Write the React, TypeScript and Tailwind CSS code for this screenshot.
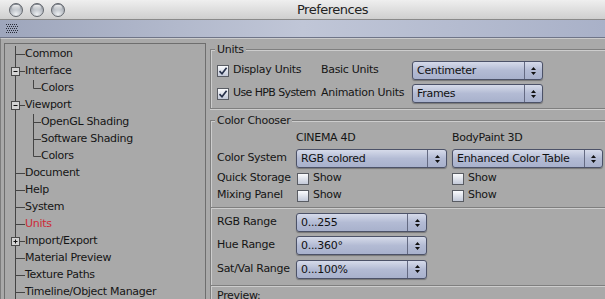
import React from "react";

type TreeItem = {
  label: string;
  child?: boolean;
  last?: boolean;
  box?: "minus" | "plus";
  active?: boolean;
};

const treeItems: TreeItem[] = [
  { label: "Common" },
  { label: "Interface", box: "minus" },
  { label: "Colors", child: true, last: true },
  { label: "Viewport", box: "minus" },
  { label: "OpenGL Shading", child: true },
  { label: "Software Shading", child: true },
  { label: "Colors", child: true, last: true },
  { label: "Document" },
  { label: "Help" },
  { label: "System" },
  { label: "Units", active: true },
  { label: "Import/Export", box: "plus" },
  { label: "Material Preview" },
  { label: "Texture Paths" },
  { label: "Timeline/Object Manager" },
];

function TrafficLight() {
  return (
    <span className="flex h-[14px] w-[14px] justify-center rounded-full border border-[#62666d] bg-[radial-gradient(circle_at_50%_85%,#eceff2_0%,#b4b9c0_55%,#767b83_100%)] pt-[1px]">
      <span className="h-[5px] w-[8px] rounded-full bg-gradient-to-b from-[#ffffffdd] to-[#ffffff00]" />
    </span>
  );
}

function Grip() {
  const dots = [];
  for (let r = 0; r < 5; r++) {
    for (let c = 0; c < 6; c++) {
      dots.push(<rect key={`${r}-${c}`} x={c * 2 + (r % 2)} y={r * 2} width={1} height={1} fill="#2a2d38" />);
    }
  }
  return (
    <svg width={12} height={10} viewBox="0 0 12 10" className="shrink-0">
      {dots}
    </svg>
  );
}

function TreeRow({ item }: { item: TreeItem }) {
  const w = item.child ? 36 : 20;
  return (
    <div className="flex h-[17px] items-center">
      <svg width={w} height={17} viewBox={`0 0 ${w} 17`} className="shrink-0">
        <line x1={10.5} y1={0} x2={10.5} y2={17} stroke="#444" />
        {item.child ? (
          <>
            <line x1={28.5} y1={0} x2={28.5} y2={item.last ? 8.5 : 17} stroke="#444" />
            <line x1={28.5} y1={8.5} x2={36} y2={8.5} stroke="#444" />
          </>
        ) : (
          <line x1={10.5} y1={8.5} x2={20} y2={8.5} stroke="#444" />
        )}
        {item.box && (
          <>
            <rect x={6.5} y={4.5} width={8} height={8} fill="#d4d4d4" stroke="#4a4a4a" />
            <line x1={8.5} y1={8.5} x2={12.5} y2={8.5} stroke="#111" />
            {item.box === "plus" && <line x1={10.5} y1={6.5} x2={10.5} y2={10.5} stroke="#111" />}
          </>
        )}
      </svg>
      <span className={item.active ? "text-[#cc2a36]" : "text-[#151515]"}>{item.label}</span>
    </div>
  );
}

function Checkbox({ checked }: { checked?: boolean }) {
  return (
    <span className="flex h-[12px] w-[12px] shrink-0 items-center justify-center border border-[#595c63] bg-gradient-to-b from-[#fbfcfe] to-[#c3c9d8]">
      {checked && (
        <svg width={10} height={10} viewBox="0 0 10 10">
          <path d="M1.5 5.2 L4 7.8 L8.6 1.8" fill="none" stroke="#27314a" strokeWidth={1.7} />
        </svg>
      )}
    </span>
  );
}

function Popup({ value, width, arrow }: { value: string; width: string; arrow: string }) {
  return (
    <div
      className={`${width} flex h-[19px] shrink-0 rounded-[3px] border border-[#4c5268] bg-gradient-to-b from-[#d6dbea] via-[#b3bbd4] to-[#a8b1cc] shadow-[0_1px_1px_rgba(0,0,0,0.3)]`}
    >
      <span className="flex-1 truncate pl-[4px] leading-[17px] text-[#111]">{value}</span>
      <span className={`${arrow} flex items-center justify-center border-l border-[#646a82]`}>
        <svg width={5} height={8} viewBox="0 0 5 8">
          <path d="M2.5 0 L5 3 L0 3 Z M0 5 L5 5 L2.5 8 Z" fill="#111" />
        </svg>
      </span>
    </div>
  );
}

// etched separator: dark line over a light one
function Separator({ className }: { className: string }) {
  return <div className={`${className} h-[2px] border-b border-t border-b-[#cdcdcd] border-t-[#7f7f7f]`} />;
}

export default function App() {
  return (
    <div className="flex h-[299px] w-[605px] flex-col overflow-hidden bg-[#a9a9a9] font-[family-name:DejaVu_Sans,sans-serif] text-[11px] tracking-[-0.3px] text-[#151515]">
      {/* title bar */}
      <div className="flex h-[20px] shrink-0 items-center border-b border-[#8a8a8a] bg-gradient-to-b from-[#efefef] to-[#cfcfcf] pl-[9px]">
        <div className="flex gap-[7px]">
          <TrafficLight />
          <TrafficLight />
          <TrafficLight />
        </div>
        <span className="ml-[232px] text-[13px] tracking-[-0.5px] text-[#222]">Preferences</span>
      </div>

      {/* toolbar */}
      <div className="flex h-[18px] shrink-0 items-center border-b border-[#6f7588] bg-gradient-to-r from-[#9ea6bc] via-[#c0c6d7] to-[#a9b1c8] pl-[6px]">
        <Grip />
      </div>

      <div className="flex min-h-0 flex-1 border-l border-t border-l-[#7c7c7c] border-t-[#cbcbcb]">
        {/* tree */}
        <div className="flex w-[206px] shrink-0 flex-col pl-[3px] pt-[4px]">
          <div className="w-[202px] flex-1 border border-[#6e6e6e] pt-[2px]">
            {treeItems.map((item, i) => (
              <TreeRow key={i} item={item} />
            ))}
          </div>
        </div>

        {/* settings */}
        <div className="flex min-w-0 flex-1 flex-col pl-[3px] pt-[4px]">
          <fieldset className="border border-r-0 border-[#7f7f7f] p-0 shadow-[inset_1px_1px_0_#cdcdcd,0_1px_0_#cdcdcd]">
            <legend className="ml-[4px] bg-[#a9a9a9] px-[2px] leading-[13px]">Units</legend>
            <div className="pb-[3px] pl-[6px] pt-[3px]">
              <div className="flex h-[23px] items-center">
                <div className="flex w-[104px] items-center gap-[4px]">
                  <Checkbox checked />
                  <span>Display Units</span>
                </div>
                <span className="w-[91px]">Basic Units</span>
                <Popup value="Centimeter" width="w-[131px]" arrow="w-[18px]" />
              </div>
              <div className="flex h-[23px] items-center">
                <div className="flex w-[104px] items-center gap-[4px]">
                  <Checkbox checked />
                  <span className="whitespace-nowrap tracking-[-0.6px]">Use HPB System</span>
                </div>
                <span className="w-[91px] whitespace-nowrap">Animation Units</span>
                <Popup value="Frames" width="w-[131px]" arrow="w-[18px]" />
              </div>
            </div>
          </fieldset>

          <fieldset className="mt-[5px] border border-b-0 border-r-0 border-[#7f7f7f] p-0 shadow-[inset_1px_1px_0_#cdcdcd]">
            <legend className="ml-[4px] bg-[#a9a9a9] px-[2px] leading-[13px]">Color Chooser</legend>
            <div className="pl-[6px] pt-[2px]">
              <div className="flex h-[18px] items-center">
                <span className="w-[79px]" />
                <span className="w-[156px]">CINEMA 4D</span>
                <span>BodyPaint 3D</span>
              </div>
              <div className="flex h-[23px] items-center">
                <span className="w-[79px]">Color System</span>
                <Popup value="RGB colored" width="w-[151px]" arrow="w-[19px]" />
                <span className="w-[5px]" />
                <Popup value="Enhanced Color Table" width="w-[151px]" arrow="w-[18px]" />
              </div>
              <div className="flex h-[17px] items-center">
                <span className="w-[79px] whitespace-nowrap">Quick Storage</span>
                <div className="flex w-[156px] items-center gap-[4px] pl-[1px]">
                  <Checkbox />
                  <span>Show</span>
                </div>
                <div className="flex items-center gap-[4px]">
                  <Checkbox />
                  <span>Show</span>
                </div>
              </div>
              <div className="flex h-[17px] items-center">
                <span className="w-[79px] whitespace-nowrap">Mixing Panel</span>
                <div className="flex w-[156px] items-center gap-[4px] pl-[1px]">
                  <Checkbox />
                  <span>Show</span>
                </div>
                <div className="flex items-center gap-[4px]">
                  <Checkbox />
                  <span>Show</span>
                </div>
              </div>
            </div>

            <Separator className="mt-[3px]" />
            <div className="pl-[6px] pt-[2px]">
              <div className="flex h-[23px] items-center">
                <span className="w-[79px]">RGB Range</span>
                <Popup value="0...255" width="w-[131px]" arrow="w-[19px]" />
              </div>
              <div className="flex h-[23px] items-center">
                <span className="w-[79px]">Hue Range</span>
                <Popup value="0...360°" width="w-[131px]" arrow="w-[19px]" />
              </div>
              <div className="flex h-[24px] items-center">
                <span className="w-[79px] whitespace-nowrap">Sat/Val Range</span>
                <Popup value="0...100%" width="w-[131px]" arrow="w-[19px]" />
              </div>
            </div>

            <Separator className="mt-[4px]" />
            <div className="pl-[6px] pt-[2px] leading-[13px]">Preview:</div>
          </fieldset>
        </div>
      </div>
    </div>
  );
}
